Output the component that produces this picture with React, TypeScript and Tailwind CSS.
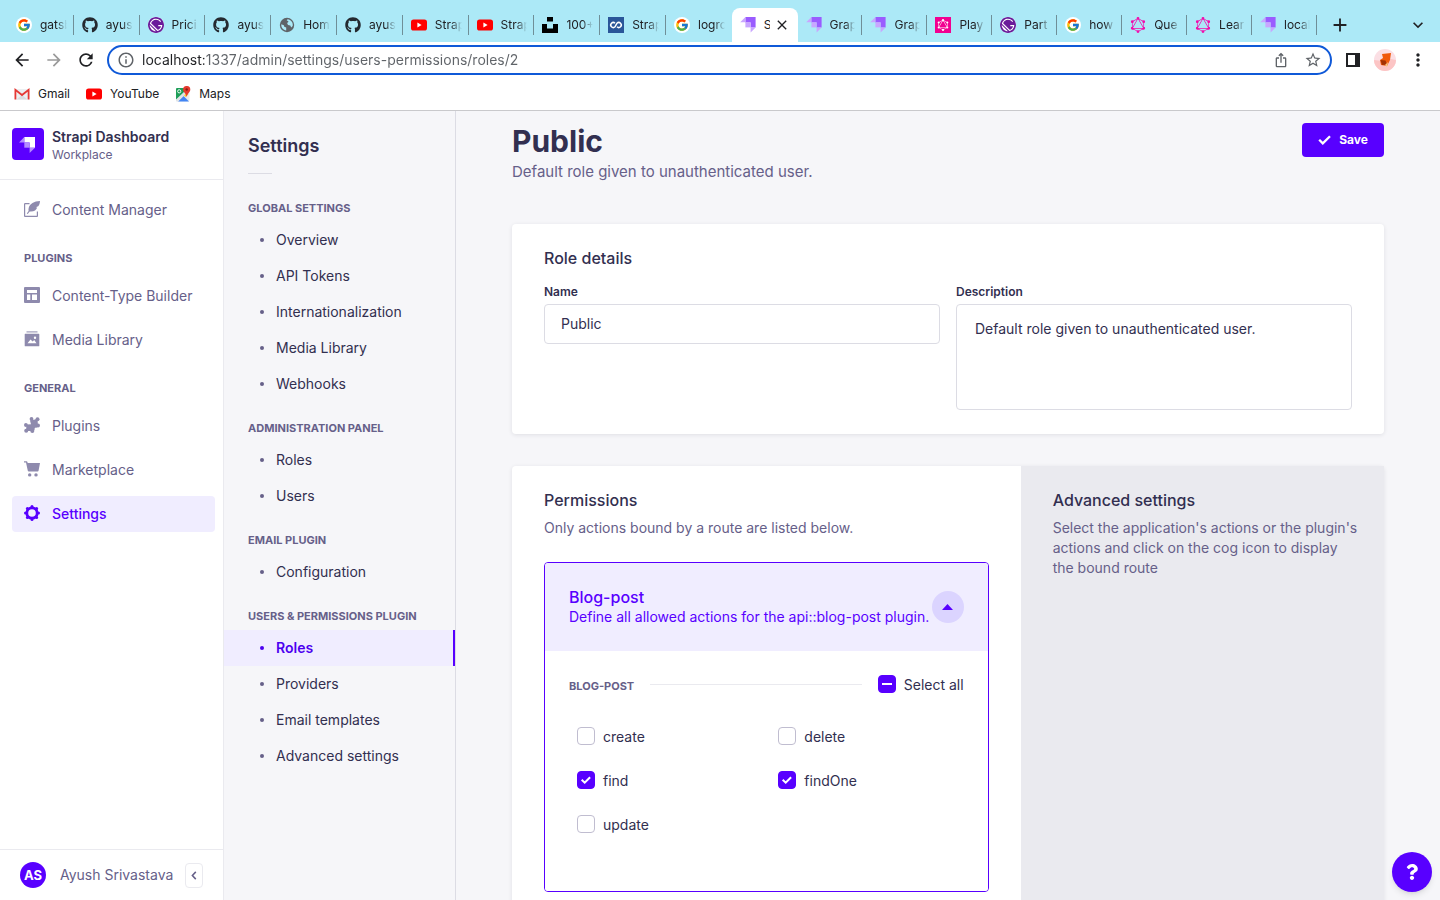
import { useState } from 'react';
import type { ReactNode } from 'react';
import { FcGoogle } from 'react-icons/fc';
import { FaGithub, FaQuestion } from 'react-icons/fa';
import { SiGatsby, SiUnsplash, SiGraphql } from 'react-icons/si';
import {
  MdAdd,
  MdArrowBack,
  MdArrowForward,
  MdClose,
  MdInfoOutline,
  MdIosShare,
  MdKeyboardArrowDown,
  MdMoreVert,
  MdRefresh,
  MdStarBorder,
} from 'react-icons/md';

/* ---------- Favicons ---------- */

const GoogleIcon = () => (
  <span className="flex size-4 items-center justify-center rounded-full bg-white">
    <FcGoogle className="size-[14px]" />
  </span>
);

const GithubIcon = () => <FaGithub className="size-4 text-[#24292f]" />;

const GatsbyIcon = () => (
  <span className="flex size-4 rounded-full bg-white">
    <SiGatsby className="size-4 text-[#6a1b9a]" />
  </span>
);

const GlobeIcon = () => (
  <svg viewBox="0 0 16 16" className="size-4" aria-hidden="true">
    <circle cx="8" cy="8" r="7.2" fill="#5f6368" />
    <path d="M2.300 7.200l2.500 1 .5 1.600 1.900.8v2.900C4.300 13 2 10.800 2.300 7.200z" fill="#ace9f7" />
    <path d="M8.500 2.200c2 .2 3.900 1.300 4.800 3.200.5 1.100.6 2.300.4 3.600l-1.500 1.600-.9-2.200-2.300-.4-.9-2 1.300-.9-.3-1.200-1.400-.4z" fill="#ace9f7" />
  </svg>
);

const YoutubeIcon = () => (
  <svg viewBox="0 0 16 16" className="size-4" aria-hidden="true">
    <rect x="0" y="2.4" width="16" height="11.2" rx="2.6" fill="#f00" />
    <path d="M6.4 5.6v4.8L10.6 8z" fill="#fff" />
  </svg>
);

const UnsplashIcon = () => <SiUnsplash className="size-4 text-black" />;

const LoopIcon = () => (
  <svg viewBox="0 0 16 16" className="size-4" aria-hidden="true">
    <rect width="16" height="16" fill="#2a5699" />
    <path
      d="M7 6.2A2.5 2.5 0 1 0 7 9.8L9 6.2a2.5 2.5 0 1 1 0 3.6"
      fill="none"
      stroke="#fff"
      strokeWidth="1.5"
    />
  </svg>
);

const StrapiIcon = () => (
  <svg viewBox="0 0 16 16" className="size-4" aria-hidden="true">
    <path d="M5.4 0H15.6v10.4H10.6V5.4H5.4z" fill="#9a5cff" />
    <path d="M5.4 5.2h5.2v5.2H5.4z" fill="#c9a6ff" />
    <path d="M5.4 0v5.2H.2z" fill="#c9a6ff" />
    <path d="M10.6 10.4h5l-5 5.2z" fill="#c9a6ff" />
  </svg>
);

const PlaygroundIcon = () => (
  <span className="flex size-4 items-center justify-center bg-[#f20090]">
    <SiGraphql className="size-3 text-white" />
  </span>
);

const GraphqlIcon = () => <SiGraphql className="size-4 text-[#f20cac]" />;

const GmailIcon = () => (
  <svg viewBox="0 0 16 16" className="size-4" aria-hidden="true">
    <path d="M1.5 3h13v10.5h-13z" fill="#eceff1" />
    <path d="M2.5 13.5L8 9l5.500 4.500z" fill="#dadde0" />
    <path d="M1.400 13.500V3.800L8 9l6.600-5.200v9.700" fill="none" stroke="#e53935" strokeWidth="1.800" />
  </svg>
);

const MapsIcon = () => (
  <svg viewBox="0 0 16 16" className="size-4" aria-hidden="true">
    <rect x="1" y="2" width="13.500" height="13.500" rx="1.500" fill="#e8eaed" />
    <path d="M2 2h8l1 3.500L1 14V3a1 1 0 0 1 1-1z" fill="#1e9e58" />
    <path d="M3 15.500L8.500 10l5.500 5.500z" fill="#4285f4" />
    <path d="M1 13.500L10.500 4.500l1.500 2.200L3 15.500H2a1 1 0 0 1-1-1z" fill="#dfe3e6" />
    <path d="M9 9.500l3-3 1.500 1.500-3 3z" fill="#fbc92d" />
    <circle cx="4.200" cy="5.300" r="1.600" fill="none" stroke="#fff" strokeWidth=".9" />
    <path d="M11.700 0a3.500 3.500 0 0 1 3.600 3.500c0 2.500-2.800 3.500-3.400 7h-.4c-.6-3.500-3.400-4.500-3.400-7A3.500 3.500 0 0 1 11.700 0z" fill="#e53a2e" />
    <circle cx="11.700" cy="3.500" r="1.200" fill="#8c1d15" />
  </svg>
);

/* ---------- Browser chrome ---------- */

interface Tab {
  title: string;
  icon: () => ReactNode;
}

const ACTIVE_TAB = 11;

const tabs: Tab[] = [
  { title: 'gatsb', icon: GoogleIcon },
  { title: 'ayus', icon: GithubIcon },
  { title: 'Prici', icon: GatsbyIcon },
  { title: 'ayus', icon: GithubIcon },
  { title: 'Hom', icon: GlobeIcon },
  { title: 'ayus', icon: GithubIcon },
  { title: 'Strap', icon: YoutubeIcon },
  { title: 'Strap', icon: YoutubeIcon },
  { title: '100+', icon: UnsplashIcon },
  { title: 'Strap', icon: LoopIcon },
  { title: 'logro', icon: GoogleIcon },
  { title: 'S', icon: StrapiIcon },
  { title: 'Grap', icon: StrapiIcon },
  { title: 'Grap', icon: StrapiIcon },
  { title: 'Play', icon: PlaygroundIcon },
  { title: 'Part', icon: GatsbyIcon },
  { title: 'how', icon: GoogleIcon },
  { title: 'Que', icon: GraphqlIcon },
  { title: 'Lear', icon: GraphqlIcon },
  { title: 'local', icon: StrapiIcon },
];

function TabStrip() {
  return (
    <div className="flex h-[42px] bg-[#ace9f7] pl-2 text-[#202124]">
      <div role="tablist" className="flex min-w-0 flex-1 pt-2">
        {tabs.map(({ title, icon: Icon }, i) =>
          i === ACTIVE_TAB ? (
            <div key={i} className="flex min-w-0 flex-[66] items-center rounded-t-lg bg-white pl-2">
              <button role="tab" aria-selected="true" className="flex min-w-0 items-center gap-2">
                <span className="shrink-0"><Icon /></span>
                <span className="w-[6px] overflow-hidden text-xs">{title}</span>
              </button>
              <button aria-label="Close tab" className="ml-1 shrink-0">
                <MdClose className="size-4" />
              </button>
            </div>
          ) : (
            <button
              key={i}
              role="tab"
              aria-selected="false"
              className={i < ACTIVE_TAB ? 'flex min-w-0 flex-[66] items-center pl-2' : 'flex min-w-0 flex-[65] items-center pl-2'}
            >
              <span className="shrink-0"><Icon /></span>
              <span className="ml-2 min-w-0 flex-1 overflow-hidden text-left text-xs whitespace-nowrap [mask-image:linear-gradient(90deg,#000_60%,transparent)]">
                {title}
              </span>
              <span className={i === ACTIVE_TAB - 1 ? 'ml-[6px] w-px' : 'ml-[6px] h-5 w-px bg-[#6f8f98]'} />
            </button>
          ),
        )}
      </div>
      <div className="flex w-[123px] items-center justify-between pt-2 pr-3 pl-3">
        <button aria-label="New tab"><MdAdd className="size-[22px]" /></button>
        <button aria-label="Search tabs"><MdKeyboardArrowDown className="size-5" /></button>
      </div>
    </div>
  );
}

function Toolbar() {
  return (
    <div className="flex h-9 items-center bg-white pr-3 pl-3 text-[#202124]">
      <div className="flex w-[95px] gap-3">
        <button aria-label="Back"><MdArrowBack className="size-5" /></button>
        <button aria-label="Forward"><MdArrowForward className="size-5 text-[#9a9a9a]" /></button>
        <button aria-label="Reload"><MdRefresh className="size-5" /></button>
      </div>
      <div className="flex h-[30px] flex-1 items-center rounded-full border-2 border-[#0f59d8] pr-2 pl-2">
        <MdInfoOutline className="size-[18px] text-[#5f6368]" />
        <input
          aria-label="Address"
          defaultValue="localhost:1337/admin/settings/users-permissions/roles/2"
          className="ml-[7px] flex-1 bg-[linear-gradient(90deg,#202124_62px,#5f6368_62px)] bg-clip-text text-sm text-transparent outline-none"
        />
        <button aria-label="Share"><MdIosShare className="size-4 text-[#5f6368]" /></button>
        <button aria-label="Bookmark" className="ml-[15px]">
          <MdStarBorder className="size-[18px] text-[#5f6368]" />
        </button>
      </div>
      <div className="flex items-center pl-[14px]">
        <button aria-label="Side panel">
          <svg viewBox="0 0 14 14" className="size-[14px]" aria-hidden="true">
            <path d="M0 0h14v14H0zM2 2v10h7V2z" fill="#202124" fillRule="evenodd" />
          </svg>
        </button>
        <button aria-label="Profile" className="ml-[14px]">
          <svg viewBox="0 0 22 22" className="size-[22px]" aria-hidden="true">
            <circle cx="11" cy="11" r="11" fill="#fbdfe4" />
            <path d="M0 11a11 11 0 0 0 22 0l-5-1-9 2z" fill="#fcc5c5" />
            <path d="M8 5l9-1-1 7-3 6-6-1-1-5 3-2z" fill="#f05a0c" />
            <path d="M6.500 11l5 .5 1.500 4-5 .5z" fill="#a33203" />
            <path d="M11 16l3-3-1 5z" fill="#f5c684" />
          </svg>
        </button>
        <button aria-label="Menu" className="ml-3"><MdMoreVert className="size-5" /></button>
      </div>
    </div>
  );
}

function BookmarkBar() {
  return (
    <div className="flex h-[33px] items-center gap-4 border-b border-[#c9c9cc] bg-white pl-[14px] text-xs text-[#202124]">
      <a href="#gmail" className="flex items-center gap-2"><GmailIcon />Gmail</a>
      <a href="#youtube" className="flex items-center gap-2"><YoutubeIcon />YouTube</a>
      <a href="#maps" className="flex items-center gap-2"><MapsIcon />Maps</a>
    </div>
  );
}

/* ---------- Main navigation ---------- */

const WriteIcon = () => (
  <svg viewBox="0 0 16 16" className="size-4" fill="none" aria-hidden="true">
    <path d="M5.500 2.600H1.200a.6.600 0 0 0-.6.600v11.600a.6.600 0 0 0 .6.600h11.600a.6.600 0 0 0 .6-.6V10.500" stroke="currentColor" strokeWidth="1.200" />
    <path d="M16 0C10 .2 5.800 3 4.800 6.500c-.4 1.300-.4 2.500-.2 3.400L2.800 12.600l.9.500 2-2.600c4 .5 6.800-1.500 7.500-4l-1.500-.2 2.500-1C15.300 4 15.900 2 16 0z" fill="currentColor" />
  </svg>
);

const LayoutIcon = () => (
  <svg viewBox="0 0 16 16" className="size-4" aria-hidden="true">
    <path d="M1 0h14a1 1 0 0 1 1 1v14a1 1 0 0 1-1 1H1a1 1 0 0 1-1-1V1a1 1 0 0 1 1-1zm2 3v3h10V3zm0 4.500V13h3.300V7.500zm5 0V13h5V7.500z" fill="currentColor" fillRule="evenodd" />
  </svg>
);

const MediaIcon = () => (
  <svg viewBox="0 0 16 16" className="size-4" aria-hidden="true">
    <path d="M2.500 0h11v1.700h-11z" fill="currentColor" opacity=".6" />
    <path d="M1.300 2.700h13.400c.4 0 .6.300.6.600v11.400c0 .4-.3.600-.6.600H1.300a.6.600 0 0 1-.6-.6V3.300c0-.3.300-.6.600-.6zM3.500 12.300h9l-2.300-3.200-1.600 1.500L6.500 8.500zM11 5.500a1.200 1.200 0 1 0 0 2.400 1.200 1.200 0 0 0 0-2.400z" fill="currentColor" fillRule="evenodd" />
  </svg>
);

const PuzzleIcon = () => (
  <svg viewBox="0 0 16 16" className="size-4" fill="currentColor" aria-hidden="true">
    <path d="M6 3.500L13.500 2 14 9.500 9.500 14 2 14l.5-6.500L7 7.300z" />
    <circle cx="7.500" cy="2" r="1.900" />
    <circle cx="13.500" cy="2.200" r="2" />
    <circle cx="14" cy="8.500" r="2" />
    <circle cx="1.900" cy="8" r="1.900" />
    <circle cx="2.200" cy="13.700" r="2" />
    <circle cx="8.300" cy="14" r="2" />
    <circle cx="12" cy="12" r="1.500" fill="#fff" />
  </svg>
);

const CartIcon = () => (
  <svg viewBox="0 0 16 16" className="size-4" fill="currentColor" aria-hidden="true">
    <path d="M0 .300h2.600c.4 0 .7.200.8.600L3.700 2H16l-1.400 7.600c-.1.500-.5.900-1 .9H4.800c-.5 0-.9-.3-1-.8L2 1.600H0z" />
    <circle cx="5.700" cy="13.900" r="1.700" />
    <circle cx="12" cy="13.900" r="1.700" />
  </svg>
);

const CogIcon = () => (
  <svg viewBox="0 0 16 16" className="size-4" fill="currentColor" aria-hidden="true">
    <circle cx="8" cy="8" r="5.200" fill="none" stroke="currentColor" strokeWidth="2.800" />
    <circle cx="8" cy="1.500" r="1.500" />
    <circle cx="8" cy="14.500" r="1.500" />
    <circle cx="1.500" cy="8" r="1.500" />
    <circle cx="14.500" cy="8" r="1.500" />
    <circle cx="3.400" cy="3.400" r="1.500" />
    <circle cx="12.600" cy="3.400" r="1.500" />
    <circle cx="3.400" cy="12.600" r="1.500" />
    <circle cx="12.600" cy="12.600" r="1.500" />
  </svg>
);

interface NavLink {
  label: string;
  icon: () => ReactNode;
  active?: boolean;
}

function NavItem({ label, icon: Icon, active }: NavLink) {
  return (
    <li>
      <a
        href="#nav"
        aria-current={active ? 'page' : undefined}
        className={
          active
            ? 'flex h-9 items-center gap-3 rounded bg-[#f0edff] px-3 font-medium text-[#5800ff]'
            : 'flex h-9 items-center gap-3 rounded px-3 text-[#666089]'
        }
      >
        <span className={active ? 'pb-0.5' : 'pb-0.5 text-[#8e8aad]'}><Icon /></span>
        {label}
      </a>
    </li>
  );
}

function NavGroup({ title, items }: { title?: string; items: NavLink[] }) {
  return (
    <section>
      {title && (
        <h2 className="mt-5 mb-[10px] pl-3 text-[11px] leading-5 font-bold text-[#666089] uppercase">{title}</h2>
      )}
      <ul className="flex flex-col gap-2">
        {items.map((item) => <NavItem key={item.label} {...item} />)}
      </ul>
    </section>
  );
}

function MainNav() {
  return (
    <aside className="flex w-56 shrink-0 flex-col border-r border-[#eaeaef] bg-white text-sm">
      <div className="flex items-start gap-2 border-b border-[#eaeaef] px-3 py-4">
        <svg viewBox="0 0 32 32" className="mt-px size-8" aria-hidden="true">
          <rect width="32" height="32" rx="4" fill="#5b00ff" />
          <path d="M12.300 9H23v10.700h-5.400V14.500h-5.300z" fill="#fff" />
          <path d="M12.300 14.500h5.300v5.200h-5.300z" fill="#b58cff" />
          <path d="M12.300 9v5.500H7z" fill="#b58cff" />
          <path d="M17.600 19.700H23L17.600 25z" fill="#b58cff" />
        </svg>
        <div>
          <p className="leading-5 font-semibold text-[#322f50]">Strapi Dashboard</p>
          <p className="text-xs leading-4 text-[#666089]">Workplace</p>
        </div>
      </div>
      <nav aria-label="Main" className="flex-1 py-3 pr-2 pl-3">
        <NavGroup items={[{ label: 'Content Manager', icon: WriteIcon }]} />
        <NavGroup
          title="Plugins"
          items={[
            { label: 'Content-Type Builder', icon: LayoutIcon },
            { label: 'Media Library', icon: MediaIcon },
          ]}
        />
        <NavGroup
          title="General"
          items={[
            { label: 'Plugins', icon: PuzzleIcon },
            { label: 'Marketplace', icon: CartIcon },
            { label: 'Settings', icon: CogIcon, active: true },
          ]}
        />
      </nav>
      <div className="flex h-[51px] items-center border-t border-[#eaeaef] pr-5 pl-5">
        <span className="flex size-[26px] items-center justify-center rounded-full bg-[#5800ff] text-[13px] font-bold text-white">AS</span>
        <span className="ml-[14px] flex-1 whitespace-nowrap text-[#666089]">Ayush Srivastava</span>
        <button aria-label="Collapse the navbar" className="flex h-[25px] w-[18px] items-center justify-center rounded border border-[#eaeaef]">
          <svg viewBox="0 0 6 10" className="h-[9px] w-[6px]" aria-hidden="true">
            <path d="M5 1L1.200 5 5 9" fill="none" stroke="#666089" strokeWidth="1.700" />
          </svg>
        </button>
      </div>
    </aside>
  );
}

/* ---------- Settings navigation ---------- */

const settingsGroups = [
  { title: 'Global Settings', items: ['Overview', 'API Tokens', 'Internationalization', 'Media Library', 'Webhooks'] },
  { title: 'Administration Panel', items: ['Roles', 'Users'] },
  { title: 'Email Plugin', items: ['Configuration'] },
  { title: 'Users & Permissions Plugin', items: ['Roles', 'Providers', 'Email templates', 'Advanced settings'], activeIndex: 0 },
];

function SettingsNav() {
  return (
    <nav aria-label="Settings" className="w-[232px] shrink-0 border-r border-[#dcdce4] bg-[#f6f6f9] pt-6">
      <h2 className="pl-6 text-lg leading-[22px] font-semibold text-[#322f50]">Settings</h2>
      <div className="mt-4 mb-6 ml-6 h-px w-6 bg-[#dcdce4]" />
      <div className="flex flex-col gap-4">
        {settingsGroups.map((group) => (
          <section key={group.title}>
            <h3 className="mb-1 pl-6 text-[11px] leading-5 font-bold whitespace-nowrap text-[#666089] uppercase">{group.title}</h3>
            <ul>
              {group.items.map((item, i) => (
                <li key={item}>
                  <a
                    href="#settings"
                    className={
                      group.activeIndex === i
                        ? 'flex h-9 items-center gap-3 border-r-2 border-[#5800ff] bg-[#f0edff] pl-9 text-sm font-semibold text-[#4c00f0]'
                        : 'flex h-9 items-center gap-3 pl-9 text-sm text-[#322f50]'
                    }
                  >
                    <span className={group.activeIndex === i ? 'size-1 rounded-full bg-[#4c00f0]' : 'size-1 rounded-full bg-[#666089]'} />
                    {item}
                  </a>
                </li>
              ))}
            </ul>
          </section>
        ))}
      </div>
    </nav>
  );
}

/* ---------- Role form ---------- */

interface CheckboxProps {
  id: string;
  label: string;
  checked: boolean;
  partial?: boolean;
  onChange: (checked: boolean) => void;
}

function Checkbox({ id, label, checked, partial, onChange }: CheckboxProps) {
  return (
    <div className="flex items-start gap-2">
      <span className="grid size-[18px]">
        <input
          id={id}
          type="checkbox"
          checked={checked}
          onChange={(e) => onChange(e.target.checked)}
          className={
            checked || partial
              ? 'col-start-1 row-start-1 size-[18px] appearance-none rounded border border-[#5800ff] bg-[#5800ff]'
              : 'col-start-1 row-start-1 size-[18px] appearance-none rounded border border-[#c0bdd0] bg-white'
          }
        />
        {(checked || partial) && (
          <svg viewBox="0 0 18 18" className="pointer-events-none col-start-1 row-start-1 size-[18px]" aria-hidden="true">
            <path d={!checked ? 'M4 9h10' : 'M4.700 8.700l3 3 5.400-5.500'} fill="none" stroke="#fff" strokeWidth="2" />
          </svg>
        )}
      </span>
      <label htmlFor={id} className="text-sm leading-5 text-[#322f50]">{label}</label>
    </div>
  );
}

const actions = ['create', 'delete', 'find', 'findOne', 'update'];

function Permissions() {
  const [open, setOpen] = useState(true);
  const [granted, setGranted] = useState<string[]>(['find', 'findOne']);
  const toggle = (name: string, on: boolean) =>
    setGranted((prev) => (on ? [...prev, name] : prev.filter((n) => n !== name)));

  return (
    <div className="mt-6 overflow-hidden rounded border border-[#5800ff]">
      <div className="flex h-[88px] items-center justify-between bg-[#f0edff] px-6 text-[#5800ff]">
        <div>
          <h3 className="text-base leading-5 font-medium">Blog-post</h3>
          <p className="text-sm leading-5 whitespace-nowrap">Define all allowed actions for the api::blog-post plugin.</p>
        </div>
        <button
          aria-label="Toggle Blog-post"
          aria-expanded={open}
          onClick={() => setOpen(!open)}
          className="flex size-8 shrink-0 items-center justify-center rounded-full bg-[#dbd4ff]"
        >
          <svg viewBox="0 0 11 6" className="h-[6px] w-[11px]" aria-hidden="true">
            <path d="M0 6L5.500 0 11 6z" fill="#5800ff" />
          </svg>
        </button>
      </div>
      {open && (
        <div className="bg-white px-6 pt-6 pb-12">
          <div className="flex items-start">
            <h4 className="text-[11px] leading-[22px] font-bold text-[#666089] uppercase">Blog-post</h4>
            <div className="mx-4 mt-[9px] h-px flex-1 bg-[#eaeaef]" />
            <Checkbox
              id="select-all"
              label="Select all"
              checked={granted.length === actions.length}
              partial={granted.length > 0}
              onChange={(on) => setGranted(on ? actions : [])}
            />
          </div>
          <div className="mt-[22px] grid grid-cols-2 gap-2">
            {actions.map((name) => (
              <div key={name} className="p-2">
                <Checkbox id={name} label={name} checked={granted.includes(name)} onChange={(on) => toggle(name, on)} />
              </div>
            ))}
          </div>
        </div>
      )}
    </div>
  );
}

function RoleForm() {
  return (
    <main className="min-w-0 flex-1 overflow-y-auto bg-[#f6f6f9] px-14 pt-3 text-[#322f50] [scrollbar-width:none]">
      <header className="mb-[39px] flex items-start justify-between">
        <div>
          <h1 className="text-[30px] leading-9 font-bold">Public</h1>
          <p className="text-[15px] leading-[26px] text-[#666089]">Default role given to unauthenticated user.</p>
        </div>
        <button className="flex h-[34px] items-center gap-2 rounded bg-[#5800ff] px-4 text-xs font-bold text-white">
          <svg viewBox="0 0 13 10" className="h-[10px] w-[13px]" aria-hidden="true">
            <path d="M1.200 4.800l3.600 3.600L12 1.300" fill="none" stroke="#fff" strokeWidth="2.300" />
          </svg>
          Save
        </button>
      </header>

      <section className="rounded bg-white px-8 py-6 shadow-[0_1px_4px_rgba(33,33,52,0.1)]">
        <h2 className="text-base leading-5 font-medium">Role details</h2>
        <div className="mt-4 grid grid-cols-2 gap-4">
          <div>
            <label htmlFor="role-name" className="mb-1 block text-xs leading-4 font-semibold">Name</label>
            <input
              id="role-name"
              defaultValue="Public"
              className="block h-10 w-full rounded border border-[#dcdce4] bg-white px-4 pb-0.5 text-sm outline-none"
            />
          </div>
          <div>
            <label htmlFor="role-description" className="mb-1 block text-xs leading-4 font-semibold">Description</label>
            <textarea
              id="role-description"
              defaultValue="Default role given to unauthenticated user."
              className="block h-[106px] w-full resize-none rounded border border-[#dcdce4] bg-white px-[18px] py-[14px] text-sm leading-5 outline-none"
            />
          </div>
        </div>
      </section>

      <section className="mt-8 grid grid-cols-12 rounded bg-white shadow-[0_1px_4px_rgba(33,33,52,0.1)]">
        <div className="col-span-7 px-8 py-6">
          <h2 className="text-base leading-5 font-medium">Permissions</h2>
          <p className="mt-2 text-sm leading-5 text-[#666089]">Only actions bound by a route are listed below.</p>
          <Permissions />
        </div>
        <div className="col-span-5 bg-[#eaeaef] py-6 pr-6 pl-8">
          <h2 className="text-base leading-5 font-medium">Advanced settings</h2>
          <p className="mt-2 text-sm leading-5 text-[#666089]">
            Select the application's actions or the plugin's actions and click on the cog icon to display the bound route
          </p>
        </div>
      </section>
    </main>
  );
}

export default function App() {
  return (
    <div className="flex h-screen flex-col overflow-hidden bg-white font-['Inter',sans-serif]">
      <TabStrip />
      <Toolbar />
      <BookmarkBar />
      <div className="flex min-h-0 flex-1">
        <MainNav />
        <SettingsNav />
        <RoleForm />
      </div>
      <button
        aria-label="Help"
        className="fixed right-2 bottom-2 flex size-10 items-center justify-center rounded-full bg-[#5800ff] text-white shadow-md"
      >
        <FaQuestion className="size-4" />
      </button>
    </div>
  );
}
